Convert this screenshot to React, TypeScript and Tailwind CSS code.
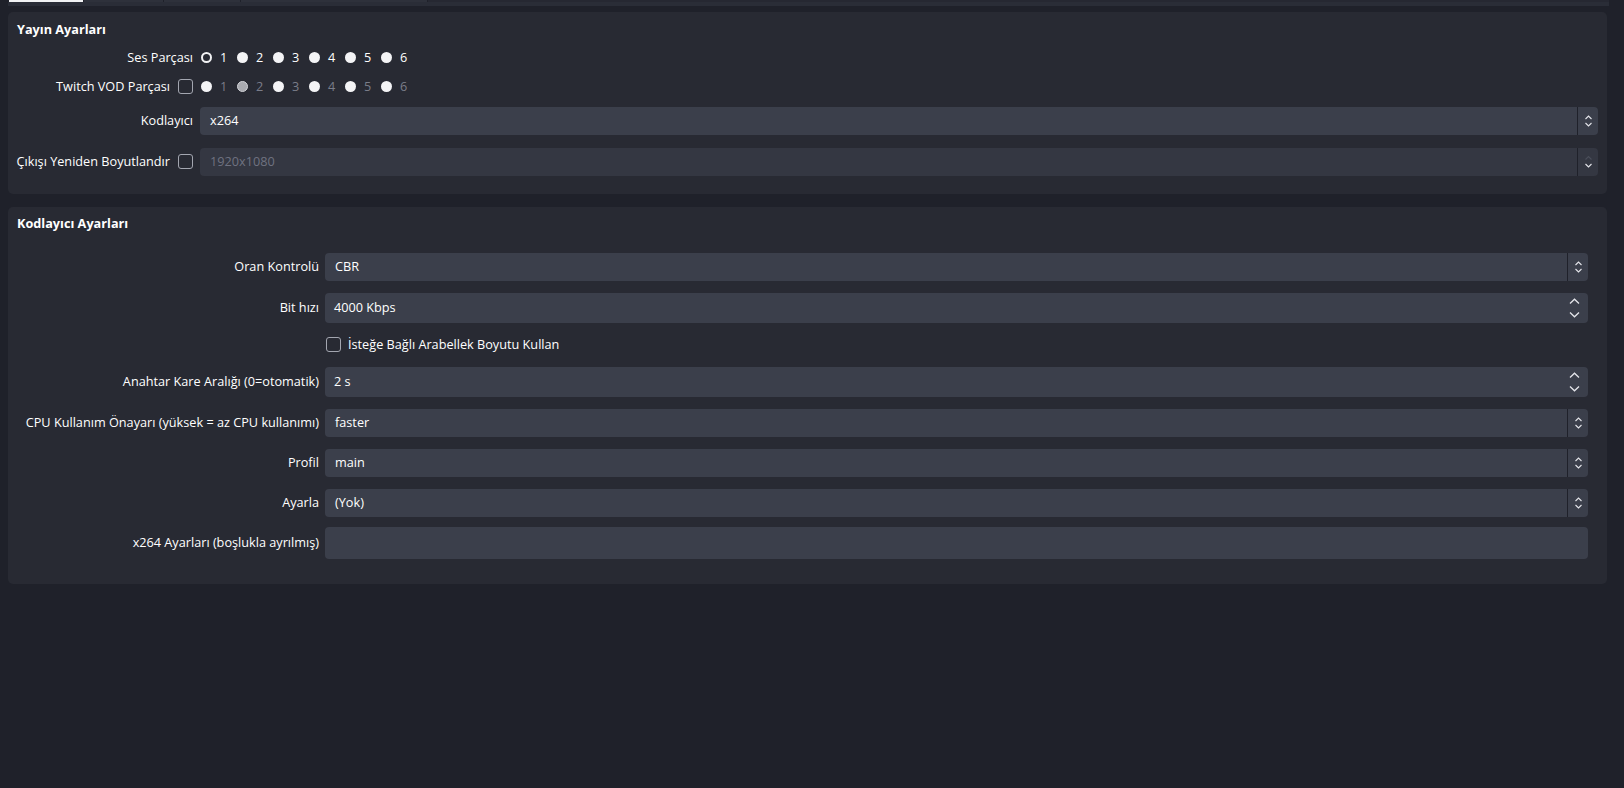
import React from 'react';

const font = { fontFamily: '"Open Sans", "Noto Sans", sans-serif' };

const ComboChevrons: React.FC<{ onlyDown?: boolean }> = ({ onlyDown }) => (
    <svg width="9" height="14" viewBox="0 0 9 14" fill="none" stroke="#e4e5ea" strokeWidth="1.1">
        {!onlyDown && <path d="M1.5 5 L4.5 2 L7.5 5" />}
        {onlyDown && <path d="M1.5 4.5 L4.5 1.5 L7.5 4.5" stroke="#4a4e5a" />}
        <path d="M1.5 9 L4.5 12 L7.5 9" />
    </svg>
);

const SpinChevrons: React.FC = () => (
    <div className="flex flex-col items-center justify-between h-[20px]">
        <svg width="11" height="7" viewBox="0 0 11 7" fill="none" stroke="#e4e5ea" strokeWidth="1.3">
            <path d="M1 5.5 L5.5 1.2 L10 5.5" />
        </svg>
        <svg width="11" height="7" viewBox="0 0 11 7" fill="none" stroke="#e4e5ea" strokeWidth="1.3">
            <path d="M1 1.5 L5.5 5.8 L10 1.5" />
        </svg>
    </div>
);

const Combo: React.FC<{ value: string; disabled?: boolean }> = ({ value, disabled }) => (
    <div className={`flex-1 flex h-[28px] rounded-[4px] ${disabled ? 'bg-[#343742]' : 'bg-[#3b3f4b]'}`}>
        <div className={`flex-1 flex items-center px-[10px] ${disabled ? 'text-[#6f7280]' : 'text-white'}`}>{value}</div>
        <div className="w-[21px] flex items-center justify-center border-l border-[#1f212a]">
            <ComboChevrons onlyDown={disabled} />
        </div>
    </div>
);

const Spin: React.FC<{ value: string }> = ({ value }) => (
    <div className="flex-1 flex h-[30px] rounded-[4px] bg-[#3b3f4b]">
        <div className="flex-1 flex items-center px-[9px] text-white">{value}</div>
        <div className="w-[28px] flex items-center justify-center">
            <SpinChevrons />
        </div>
    </div>
);

const CheckBox: React.FC = () => (
    <div className="w-[15px] h-[15px] rounded-[3px] border-[1.5px] border-[#a3a6b0] shrink-0" />
);

const Radio: React.FC<{ checked?: boolean; grey?: boolean }> = ({ checked, grey }) => {
    if (checked) return <div className="w-[11px] h-[11px] rounded-full border-[2.5px] border-[#f2f2f4]" />;
    if (grey) return <div className="w-[11px] h-[11px] rounded-full bg-[#a9aab0] border border-[#d2d3d8]" />;
    return <div className="w-[11px] h-[11px] rounded-full bg-[#f4f4f6]" />;
};

const RadioGroup: React.FC<{ checkedIdx: number; disabled?: boolean }> = ({ checkedIdx, disabled }) => (
    <div className="flex items-center pl-[1px]">
        {[1, 2, 3, 4, 5, 6].map(n => (
            <div key={n} className="flex items-center w-[36px]">
                <Radio checked={!disabled && n === checkedIdx} grey={disabled && n === checkedIdx} />
                <span className={`ml-[8px] ${disabled ? 'text-[#7a7d89]' : 'text-white'}`}>{n}</span>
            </div>
        ))}
    </div>
);

const Row1: React.FC<{ label: React.ReactNode; children: React.ReactNode; className?: string }> = ({ label, children, className }) => (
    <div className={`flex items-center ${className ?? ''}`}>
        <div className="w-[177px] shrink-0 flex items-center justify-end">{label}</div>
        <div className="flex-1 flex items-center pl-[7px]">{children}</div>
    </div>
);

const Row2: React.FC<{ label?: string; children: React.ReactNode; className?: string }> = ({ label, children, className }) => (
    <div className={`flex items-center ${className ?? ''}`}>
        <div className="w-[303px] shrink-0 text-right whitespace-nowrap">{label}</div>
        <div className="flex-1 flex items-center pl-[6px]">{children}</div>
    </div>
);

const App: React.FC = () => {
    return (
        <div className="w-[1624px] h-[788px] bg-[#1f212a] text-[12.7px] text-white overflow-hidden" style={font}>
            {/* cut off tab bar */}
            <div className="h-[2px] flex pl-[9px]">
                <div className="w-[74px] bg-[#f2f2f4]" />
                <div className="w-[80px] bg-[#2e313b] border-l border-[#1f212a]" />
                <div className="w-[77px] bg-[#2e313b] border-l border-[#1f212a]" />
                <div className="w-[187px] bg-[#2e313b] border-l border-[#1f212a]" />
                <div className="flex-1 bg-[#262832] border-l border-[#1f212a] mr-[15px]" />
            </div>
            <div className="h-[4px] ml-[8px] mr-[15px] bg-[#2a2d37]" />
            <div className="pl-[8px] pr-[17px] pt-[6px]">
                {/* Yayın Ayarları */}
                <div className="bg-[#282a33] rounded-[5px] pl-[8px] pr-[9px] pt-[8px] pb-[18px]">
                    <div className="font-bold h-[18px] leading-[18px] pl-[1px]">Yayın Ayarları</div>
                    <Row1 className="mt-[10px] h-[20px]" label={<span>Ses Parçası</span>}>
                        <RadioGroup checkedIdx={1} />
                    </Row1>
                    <Row1
                        className="mt-[9px] h-[20px]"
                        label={
                            <>
                                <span>Twitch VOD Parçası</span>
                                <span className="ml-[8px]"><CheckBox /></span>
                            </>
                        }
                    >
                        <RadioGroup checkedIdx={2} disabled />
                    </Row1>
                    <Row1 className="mt-[10px]" label={<span>Kodlayıcı</span>}>
                        <Combo value="x264" />
                    </Row1>
                    <Row1
                        className="mt-[13px]"
                        label={
                            <>
                                <span className="whitespace-nowrap">Çıkışı Yeniden Boyutlandır</span>
                                <span className="ml-[8px]"><CheckBox /></span>
                            </>
                        }
                    >
                        <Combo value="1920x1080" disabled />
                    </Row1>
                </div>

                {/* Kodlayıcı Ayarları */}
                <div className="mt-[13px] bg-[#282a33] rounded-[5px] pl-[8px] pr-[19px] pt-[7px] pb-[25px]">
                    <div className="font-bold h-[18px] leading-[18px] pl-[1px]">Kodlayıcı Ayarları</div>
                    <Row2 className="mt-[21px]" label="Oran Kontrolü">
                        <Combo value="CBR" />
                    </Row2>
                    <Row2 className="mt-[12px]" label="Bit hızı">
                        <Spin value="4000 Kbps" />
                    </Row2>
                    <Row2 className="mt-[12px] h-[20px]">
                        <div className="flex items-center gap-[7px] pl-[1px]">
                            <CheckBox />
                            <span>İsteğe Bağlı Arabellek Boyutu Kullan</span>
                        </div>
                    </Row2>
                    <Row2 className="mt-[12px]" label="Anahtar Kare Aralığı (0=otomatik)">
                        <Spin value="2 s" />
                    </Row2>
                    <Row2 className="mt-[12px]" label="CPU Kullanım Önayarı (yüksek = az CPU kullanımı)">
                        <Combo value="faster" />
                    </Row2>
                    <Row2 className="mt-[12px]" label="Profil">
                        <Combo value="main" />
                    </Row2>
                    <Row2 className="mt-[12px]" label="Ayarla">
                        <Combo value="(Yok)" />
                    </Row2>
                    <Row2 className="mt-[10px]" label="x264 Ayarları (boşlukla ayrılmış)">
                        <div className="flex-1 h-[32px] rounded-[4px] bg-[#3b3f4b]" />
                    </Row2>
                </div>
            </div>
        </div>
    );
};

export default App;
